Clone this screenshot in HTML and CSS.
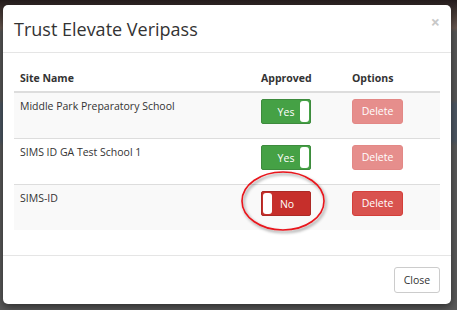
FILE: index.html
```html
<!DOCTYPE html>
<html>
<head>
<meta charset="utf-8">
<link rel="stylesheet" href="styles.css">
</head>
<body>
<div class="backdrop">
  <div class="modal">
    <div class="modal-header">
      <h4 class="modal-title">Trust Elevate Veripass</h4>
      <span class="close">×</span>
    </div>
    <div class="modal-body">
      <div class="table">
        <div class="row head">
          <div class="cell">Site Name</div>
          <div class="cell">Approved</div>
          <div class="cell">Options</div>
        </div>
        <div class="row striped">
          <div class="cell">Middle Park Preparatory School</div>
          <div class="cell"><span class="toggle on"><span class="lbl">Yes</span><span class="knob"></span></span></div>
          <div class="cell"><span class="btn-del disabled">Delete</span></div>
        </div>
        <div class="row">
          <div class="cell">SIMS ID GA Test School 1</div>
          <div class="cell"><span class="toggle on"><span class="lbl">Yes</span><span class="knob"></span></span></div>
          <div class="cell"><span class="btn-del disabled">Delete</span></div>
        </div>
        <div class="row striped last">
          <div class="cell">SIMS-ID</div>
          <div class="cell"><span class="toggle off"><span class="knob"></span><span class="lbl">No</span></span></div>
          <div class="cell"><span class="btn-del">Delete</span></div>
        </div>
      </div>
      <svg class="circle" width="90" height="66" viewBox="0 0 90 66">
        <defs>
          <filter id="sh" x="-20%" y="-20%" width="140%" height="140%">
            <feDropShadow dx="1.5" dy="2" stdDeviation="1.5" flood-color="#000" flood-opacity="0.45"/>
          </filter>
        </defs>
        <ellipse cx="43" cy="31" rx="41" ry="29" fill="none" stroke="#e8141b" stroke-width="1.6" filter="url(#sh)"/>
      </svg>
    </div>
    <div class="modal-footer">
      <span class="btn-close">Close</span>
    </div>
  </div>
</div>
</body>
</html>
```

FILE: styles.css
```css
* { box-sizing: border-box; }
html, body { margin: 0; padding: 0; }
body {
  width: 457px;
  height: 310px;
  overflow: hidden;
  font-family: "Open Sans", "Liberation Sans", sans-serif;
  color: #333;
  background:
    linear-gradient(to bottom, #241c1c 0px, #6a5a52 28px, #585858 32px, #585858 100px, #4d5864 104px, #4d5864 140px, #5a5a5a 146px, #5a5a5a 100%);
}
.backdrop {
  padding: 5px 6px 6px 3px;
}
.modal {
  position: relative;
  width: 448px;
  height: 299px;
  background: #fff;
  border-radius: 5px;
  box-shadow: 0 3px 9px rgba(0,0,0,0.5);
  display: flex;
  flex-direction: column;
}
.modal-header {
  position: relative;
  height: 48px;
  border-bottom: 1px solid #e5e5e5;
  padding: 12px 11px 0 11px;
}
.modal-title {
  margin: 0;
  font-size: 18px;
  font-weight: 400;
  line-height: 24px;
  color: #333;
}
.close {
  position: absolute;
  right: 11px;
  top: 7px;
  font-size: 16px;
  font-weight: 700;
  color: #c8c8c8;
  line-height: 20px;
}
.modal-body {
  position: relative;
  flex: 1;
  padding: 13px 11px 0 11px;
}
.table {
  width: 426px;
  display: flex;
  flex-direction: column;
}
.row {
  display: grid;
  grid-template-columns: 241px 91px 94px;
  height: 46px;
  border-top: 1px solid #ddd;
}
.row.striped { background: #f9f9f9; }
.row.head {
  height: 26px;
  border-top: none;
  border-bottom: 1px solid #ddd;
  font-weight: 700;
}
.row.head + .row { border-top: 1px solid #ddd; height: 46px; }
.row.head .cell { padding-top: 4px; }
.cell {
  padding: 6px 6px 0 6px;
  font-size: 10.5px;
  line-height: 17px;
}
.row:not(.head) .cell:first-child { padding-top: 5px; }
.toggle {
  display: flex;
  align-items: center;
  width: 50px;
  height: 25px;
  border-radius: 2px;
  padding: 1px;
  color: #fff;
  font-size: 10.5px;
}
.toggle.on { background: #45a145; border: 1px solid #3d8b3d; }
.toggle.off { background: #c62f2b; border: 1px solid #ac2925; }
.toggle .lbl { flex: 1; text-align: center; padding-top: 1px; }
.toggle.on .lbl { padding-left: 9px; }
.toggle.off .lbl { padding-right: 7px; }
.knob {
  width: 9px;
  height: 21px;
  background: #fff;
  border-radius: 3px;
}
.btn-del {
  display: flex;
  align-items: center;
  justify-content: center;
  width: 51px;
  height: 25px;
  background: #d9534f;
  border: 1px solid #d43f3a;
  border-radius: 3px;
  color: #fff;
  font-size: 10.5px;
}
.btn-del.disabled {
  background: #e68e8c;
  border-color: #e38886;
}
.circle {
  position: absolute;
  left: 237px;
  top: 117px;
}
.modal-footer {
  height: 49px;
  border-top: 1px solid #e5e5e5;
  display: flex;
  justify-content: flex-end;
  align-items: flex-start;
  padding: 11px 11px 0 0;
}
.btn-close {
  display: flex;
  align-items: center;
  justify-content: center;
  width: 46px;
  height: 26px;
  border: 1px solid #ccc;
  border-radius: 3px;
  font-size: 10.5px;
  color: #333;
  background: #fff;
}
```
